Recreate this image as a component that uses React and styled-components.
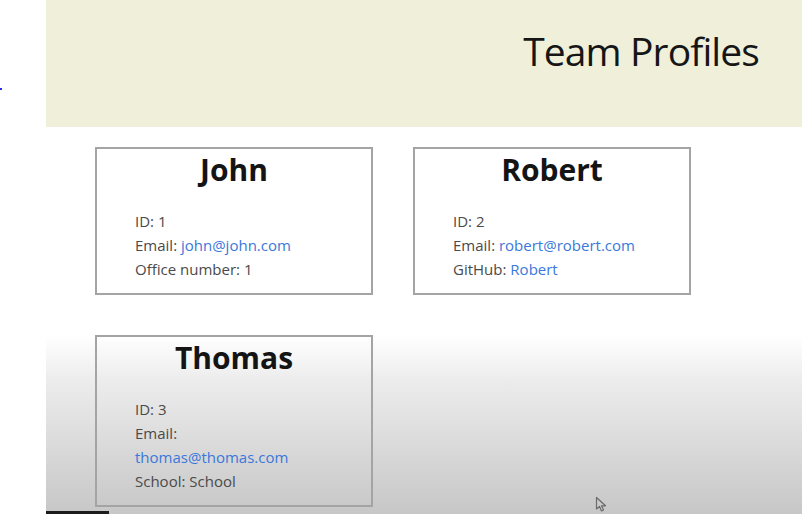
import React from "react";
import styled, { createGlobalStyle } from "styled-components";

const GlobalStyle = createGlobalStyle`
  html, body { margin: 0; padding: 0; background: #ffffff; }
  body { font-family: "Open Sans", "Noto Sans", sans-serif; }
  * { box-sizing: border-box; }
`;

const Page = styled.div`
  display: flex;
  width: 802px;
  height: 514px;
  overflow: hidden;
`;

const Gutter = styled.div`
  width: 46px;
  flex: none;
  background: #ffffff;
  padding-top: 88px;
`;

const Dot = styled.span`
  display: block;
  width: 2px;
  height: 2px;
  background: #2a2ae8;
`;

const Main = styled.main`
  position: relative;
  flex: 1;
  display: flex;
  flex-direction: column;
  background: linear-gradient(
    to bottom,
    #ffffff 0%,
    #ffffff 65%,
    #f5f5f5 70%,
    #ececec 74%,
    #e1e1e1 82%,
    #d5d5d5 90%,
    #c7c7c7 100%
  );
`;

const Header = styled.header`
  height: 127px;
  flex: none;
  background: #f0f0da;
  display: flex;
  justify-content: flex-end;
  align-items: flex-start;
  padding: 24px 43px 0 0;
`;

const Title = styled.h1`
  margin: 0;
  font-size: 39px;
  font-weight: 500;
  letter-spacing: -0.9px;
  line-height: normal;
  color: #161616;
`;

const Grid = styled.section`
  display: grid;
  grid-template-columns: 278px 278px;
  column-gap: 40px;
  row-gap: 40px;
  padding: 20px 0 0 49px;
  align-items: start;
`;

const Card = styled.article`
  border: 2px solid #a4a4a4;
  padding: 0 0 12px 0;
  background: transparent;
`;

const Name = styled.h2`
  margin: 0 0 19px 0;
  text-align: center;
  font-size: 30px;
  font-weight: 700;
  line-height: normal;
  color: #141414;
`;

const Details = styled.ul`
  list-style: none;
  margin: 0;
  padding: 0 0 0 38px;
`;

const Item = styled.li`
  font-size: 15px;
  line-height: 24px;
  color: #4a4a4a;
`;

const Link = styled.a`
  color: #3a78db;
  text-decoration: none;
  display: ${(p) => (p.$block ? "block" : "inline")};
`;

const ProgressBar = styled.div`
  position: absolute;
  left: 0;
  bottom: 0;
  width: 63px;
  height: 3px;
  background: #1c1c1c;
`;

const Cursor = styled.svg`
  position: absolute;
  left: 549px;
  top: 496px;
  width: 14px;
  height: 16px;
`;

const employees = [
  {
    name: "John",
    id: 1,
    email: "john@john.com",
    extra: { label: "Office number", value: "1" },
  },
  {
    name: "Robert",
    id: 2,
    email: "robert@robert.com",
    extra: { label: "GitHub", value: "Robert", link: true },
  },
  {
    name: "Thomas",
    id: 3,
    email: "thomas@thomas.com",
    wrapEmail: true,
    extra: { label: "School", value: "School" },
  },
];

export default function App() {
  return (
    <>
      <GlobalStyle />
      <Page>
        <Gutter>
          <Dot />
        </Gutter>
        <Main>
          <Header>
            <Title>Team Profiles</Title>
          </Header>
          <Grid>
            {employees.map((e) => (
              <Card key={e.id}>
                <Name>{e.name}</Name>
                <Details>
                  <Item>ID: {e.id}</Item>
                  <Item>
                    Email: <Link $block={e.wrapEmail} href={`mailto:${e.email}`}>{e.email}</Link>
                  </Item>
                  <Item>
                    {e.extra.label}:{" "}
                    {e.extra.link ? <Link href="#">{e.extra.value}</Link> : e.extra.value}
                  </Item>
                </Details>
              </Card>
            ))}
          </Grid>
          <Cursor viewBox="0 0 14 16">
            <path
              d="M1.5 1.5 L1.5 13 L4.5 10.5 L6.5 15 L8.5 14 L6.5 9.8 L10.5 9.8 Z"
              fill="none"
              stroke="#6a6a6a"
              strokeWidth="1.2"
              strokeLinejoin="round"
            />
          </Cursor>
          <ProgressBar />
        </Main>
      </Page>
    </>
  );
}
